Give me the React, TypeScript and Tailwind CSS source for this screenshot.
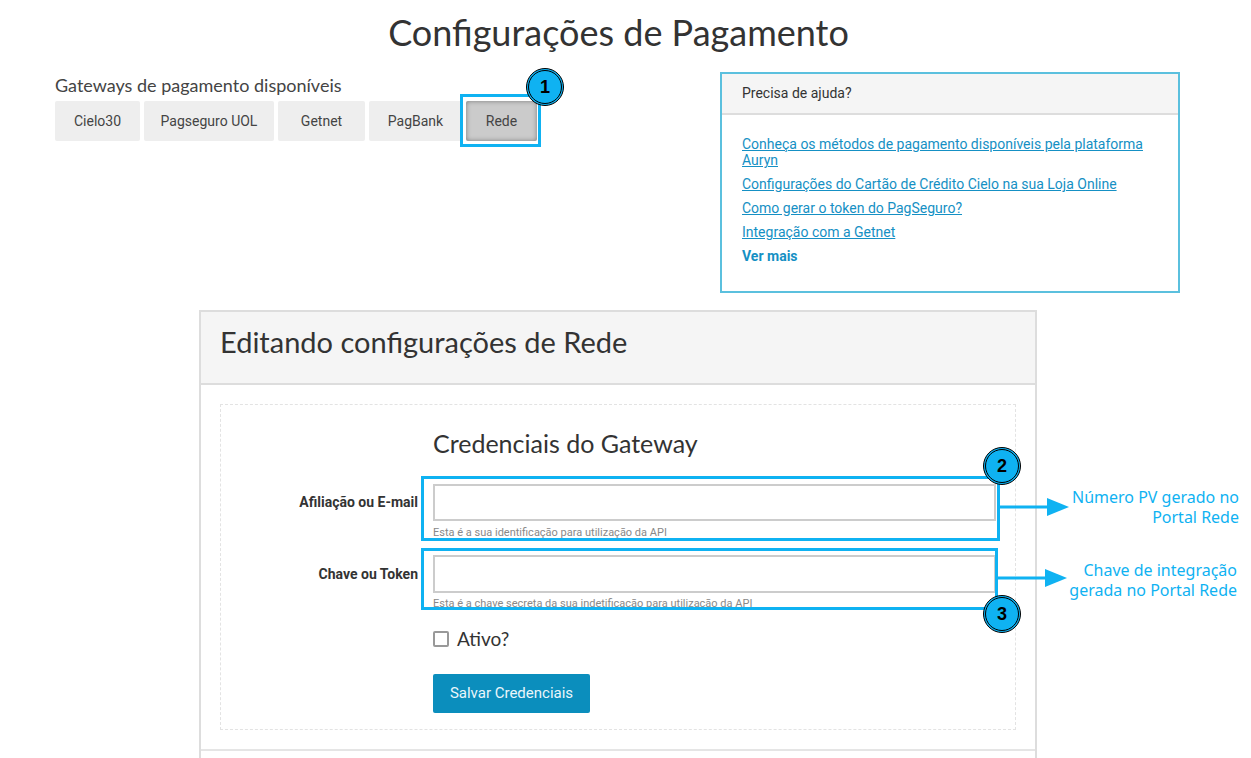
import React from 'react';

const gateways = [
  { name: 'Cielo30', w: 'w-[85px]' },
  { name: 'Pagseguro UOL', w: 'w-[130px]' },
  { name: 'Getnet', w: 'w-[87px]' },
  { name: 'PagBank', w: 'w-[93px]' },
  { name: 'Rede', w: 'w-[71px]' },
];

const helpLinks = [
  'Conheça os métodos de pagamento disponíveis pela plataforma Auryn',
  'Configurações do Cartão de Crédito Cielo na sua Loja Online',
  'Como gerar o token do PagSeguro?',
  'Integração com a Getnet',
];

// marcador numerado das anotações
const Badge: React.FC<{ n: number; className: string }> = ({ n, className }) => (
  <div
    className={`absolute w-[38px] h-[38px] rounded-full border-[3px] border-double border-black bg-[#0fb2f2] flex items-center justify-center font-['Liberation_Sans',sans-serif] font-bold text-[18px] text-black ${className}`}
  >
    {n}
  </div>
);

const Arrow: React.FC<{ className: string }> = ({ className }) => (
  <svg className={`absolute ${className}`} width="72" height="22" viewBox="0 0 72 22">
    <line x1="0" y1="11" x2="50" y2="11" stroke="#0fb2f2" strokeWidth="3" />
    <polygon points="48,2 70,11 48,20" fill="#0fb2f2" />
  </svg>
);

export default function App() {
  return (
    <div className="w-[1251px] h-[758px] overflow-hidden bg-white text-[#333] font-['Roboto',sans-serif]">
      <h1 className="pt-[10px] pr-[14px] text-center font-['Lato',sans-serif] text-[36px] leading-[44px] text-[#333]">
        Configurações de Pagamento
      </h1>

      <div className="flex mt-[18px]">
        {/* gateways */}
        <div className="pl-[55px] w-[720px]">
          <div className="pt-[1px] font-['Lato',sans-serif] text-[18px] leading-[24px] text-[#444]">
            Gateways de pagamento disponíveis
          </div>
          <div className="flex gap-[4px] mt-[4px]">
            {gateways.map((g) =>
              g.name === 'Rede' ? (
                <div key={g.name} className="relative">
                  <div
                    className={`${g.w} h-[40px] flex items-center justify-center rounded-[2px] text-[14px] text-[#444] bg-[#cbcbcb] shadow-[inset_0_0_5px_rgba(0,0,0,0.4)]`}
                  >
                    {g.name}
                  </div>
                  <div className="absolute -left-[6px] -right-[4px] -top-[7px] -bottom-[6px] border-[3px] border-[#0fb2f2]" />
                  <Badge n={1} className="left-[60px] -top-[33px]" />
                </div>
              ) : (
                <div
                  key={g.name}
                  className={`${g.w} h-[40px] flex items-center justify-center rounded-[2px] text-[14px] text-[#444] bg-[#eee]`}
                >
                  {g.name}
                </div>
              )
            )}
          </div>
        </div>

        {/* ajuda */}
        <div className="w-[460px] h-[221px] border-2 border-[#5bc0de]">
          <div className="h-[41px] bg-[#f5f5f5] border-b-2 border-[#ddd] px-[20px] flex items-center text-[14px] text-[#333]">
            Precisa de ajuda?
          </div>
          <div className="px-[20px] pt-[21px] text-[14px] leading-[16px]">
            {helpLinks.map((l) => (
              <div key={l} className="mb-[8px] pr-[10px]">
                <a className="text-[#1590c4] underline">{l}</a>
              </div>
            ))}
            <div className="font-bold text-[#1590c4]">Ver mais</div>
          </div>
        </div>
      </div>

      {/* painel de edição */}
      <div className="ml-[199px] mt-[17px] w-[838px] border-2 border-[#ddd]">
        <div className="h-[73px] bg-[#f5f5f5] border-b-2 border-[#ddd] px-[19px] pb-[11px] flex items-center">
          <h2 className="font-['Lato',sans-serif] text-[29px] text-[#333]">Editando configurações de Rede</h2>
        </div>
        <div className="p-[19px]">
          <div className="border border-dashed border-[#e3e3e3] pb-[16px]">
            <h3 className="pl-[212px] pt-[21px] font-['Lato',sans-serif] text-[25px] leading-[34px] text-[#333]">
              Credenciais do Gateway
            </h3>

            <div className="relative flex mt-[24px]">
              <label className="w-[197px] h-[37px] flex items-center justify-end font-bold text-[14px] text-[#333]">
                Afiliação ou E-mail
              </label>
              <div className="ml-[15px]">
                <div className="w-[563px] h-[37px] border-2 border-[#ccc]" />
                <div className="mt-[5px] text-[11px] leading-[14px] text-[#888]">
                  Esta é a sua identificação para utilização da API
                </div>
              </div>
              <div className="absolute left-[200px] -top-[8px] w-[579px] h-[65px] border-[3px] border-[#0fb2f2]" />
              <Badge n={2} className="left-[762px] -top-[37px]" />
              <Arrow className="left-[778px] top-[12px]" />
              <div className="absolute left-[818px] top-[3px] w-[200px] text-right font-['Noto_Sans',sans-serif] text-[16px] leading-[20px] text-[#0fb2f2]">
                Número PV gerado no
                <br />
                Portal Rede
              </div>
            </div>

            <div className="relative flex mt-[15px]">
              <label className="w-[197px] h-[38px] flex items-center justify-end font-bold text-[14px] text-[#333]">
                Chave ou Token
              </label>
              <div className="ml-[15px]">
                <div className="w-[563px] h-[38px] border-2 border-[#ccc]" />
                <div className="mt-[4px] text-[11px] leading-[14px] text-[#888]">
                  Esta é a chave secreta da sua indetificação para utilização da API
                </div>
              </div>
              <div className="absolute left-[200px] -top-[7px] w-[577px] h-[62px] border-[3px] border-[#0fb2f2]" />
              <Badge n={3} className="left-[762px] top-[40px]" />
              <Arrow className="left-[776px] top-[12px]" />
              <div className="absolute left-[816px] top-[5px] w-[200px] text-right font-['Noto_Sans',sans-serif] text-[16px] leading-[20px] text-[#0fb2f2]">
                Chave de integração
                <br />
                gerada no Portal Rede
              </div>
            </div>

            <div className="flex items-center gap-[8px] pl-[212px] mt-[17px]">
              <div className="w-[16px] h-[16px] border-2 border-[#999] rounded-[2px]" />
              <span className="font-['Lato',sans-serif] text-[19px] leading-[22px] text-[#333]">Ativo?</span>
            </div>

            <div className="pl-[212px] mt-[24px]">
              <button className="w-[157px] h-[39px] bg-[#0b8ebd] rounded-[2px] text-[15px] text-[#eaf6fb]">
                Salvar Credenciais
              </button>
            </div>
          </div>
        </div>
        <div className="h-[40px] border-t-2 border-[#e5e5e5]" />
      </div>
    </div>
  );
}
